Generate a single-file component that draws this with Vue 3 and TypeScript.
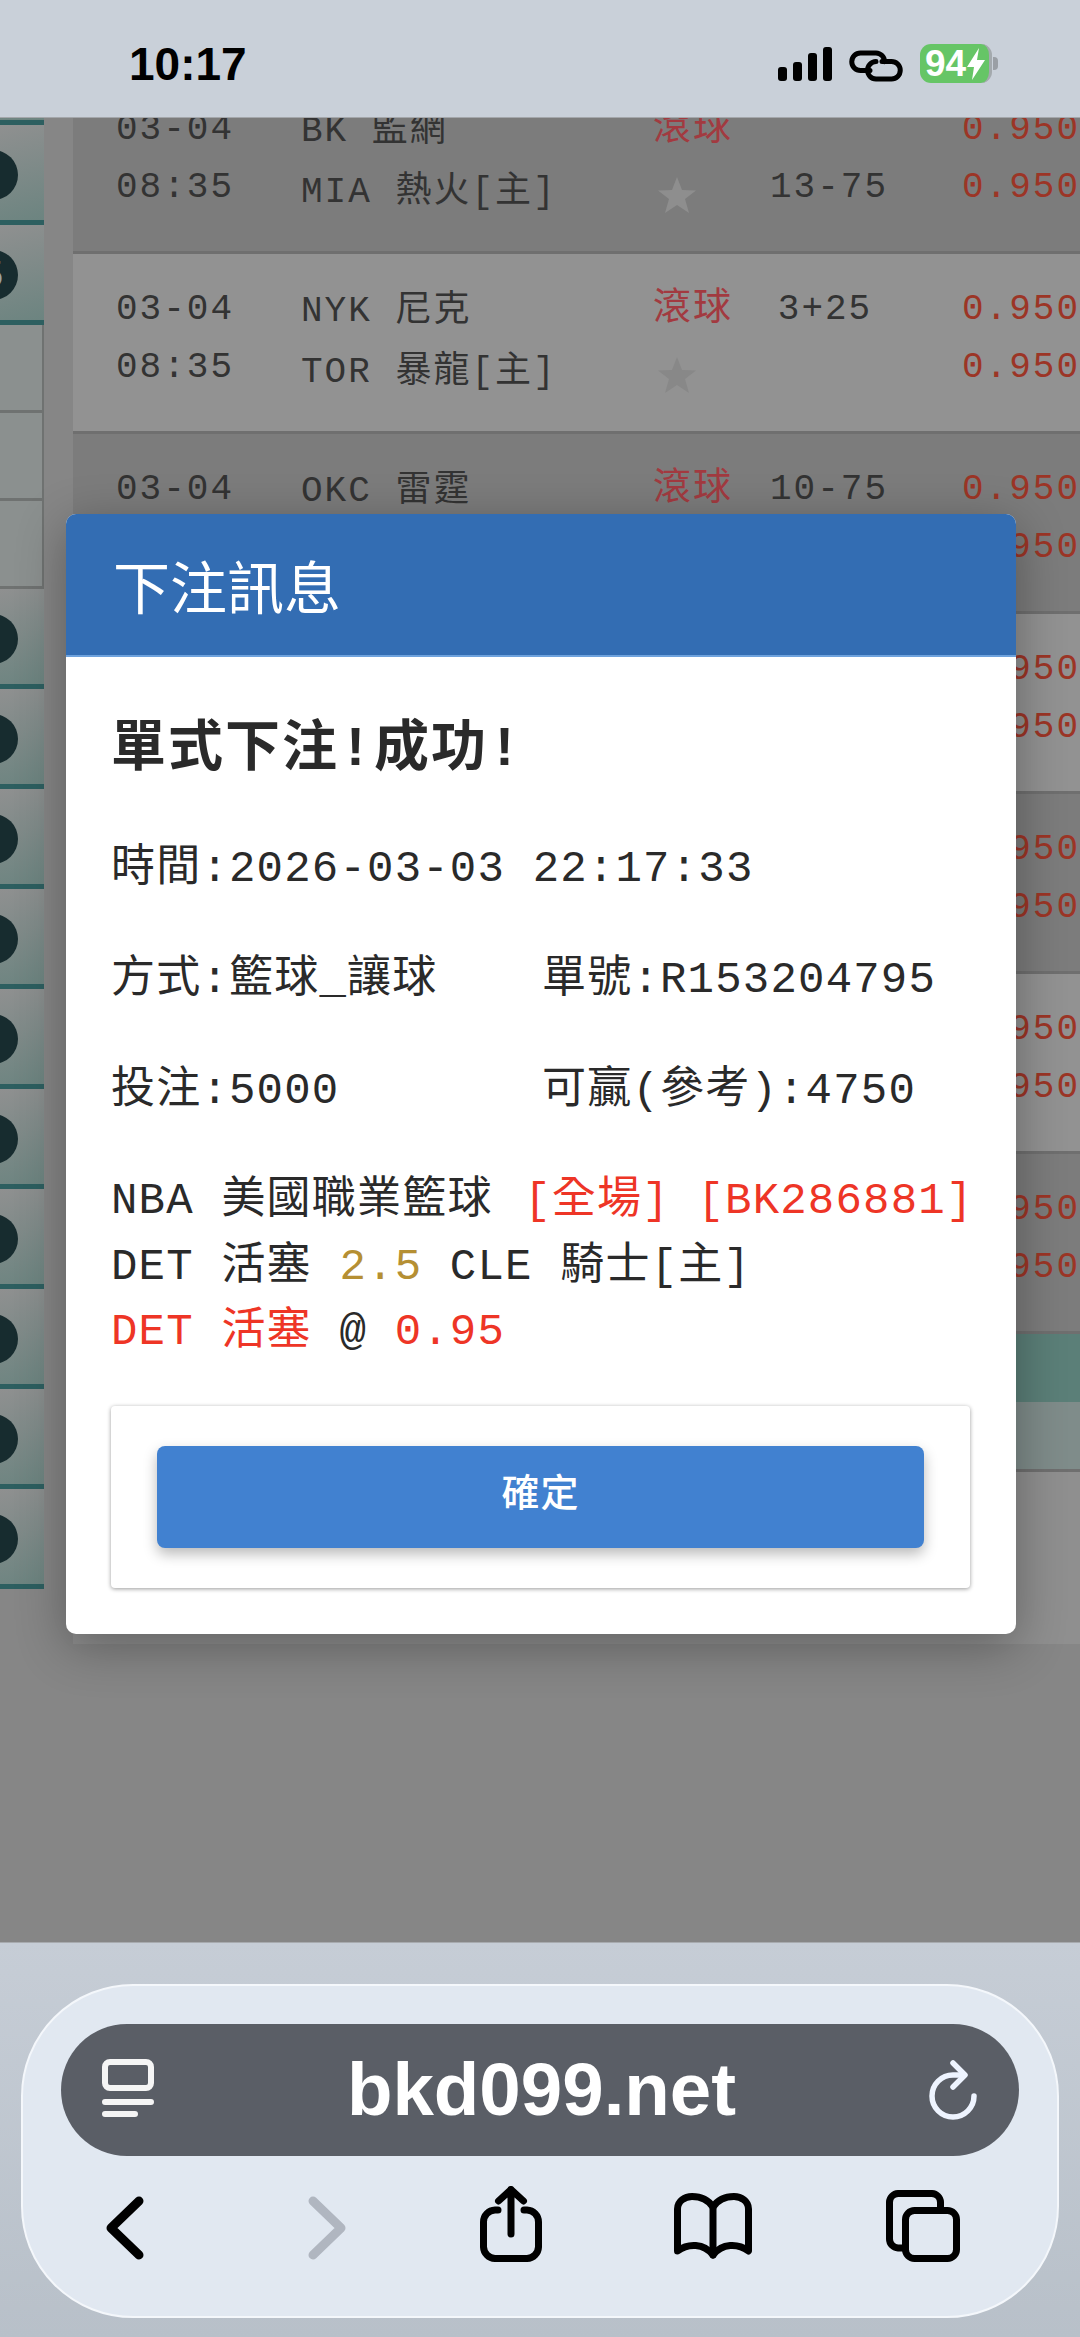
<script setup lang="ts">
interface OddsRow {
  date?: string
  time?: string
  home?: [string, string]
  away?: [string, string]
  live?: boolean
  star?: boolean
  scoreTop?: string
  scoreBottom?: string
  dark: boolean
}

const rows: OddsRow[] = [
  { date: '03-04', time: '08:35', home: ['BK', '監網'], away: ['MIA', '熱火[主]'], live: true, star: true, scoreBottom: '13-75', dark: true },
  { date: '03-04', time: '08:35', home: ['NYK', '尼克'], away: ['TOR', '暴龍[主]'], live: true, star: true, scoreTop: '3+25', dark: false },
  { date: '03-04', home: ['OKC', '雷霆'], live: true, scoreTop: '10-75', dark: true },
  { dark: false },
  { dark: true },
  { dark: false },
  { dark: true },
]

// sidebar: three items cut by the status bar, three plain rows, ten more items
const topItems = ['', '', '5']
const plainItems = [1, 2, 3]
const bottomItems = Array.from({ length: 10 }, (_, i) => i)
</script>

<template>
  <div class="phone">
    <header class="status">
      <span class="clock">10:17</span>
      <div class="status-icons">
        <div class="signal"><i class="b1" /><i class="b2" /><i class="b3" /><i class="b4" /></div>
        <svg class="link" width="54" height="32" viewBox="0 0 54 32" fill="none" stroke="#000" stroke-width="5" stroke-linecap="round">
          <path d="M21 20.5H11.5A8.7 8.7 0 0 1 11.5 3H27A8.7 8.7 0 0 1 35.5 11.7" />
          <path d="M33 11.5H42.5A8.7 8.7 0 0 1 42.5 29H27A8.7 8.7 0 0 1 18.5 20.3A8.7 8.7 0 0 1 27 11.5" />
        </svg>
        <div class="battery">
          <span class="level">94</span>
          <svg width="20" height="34" viewBox="0 0 20 34"><path d="M13 1L1 20H8L6 33L19 13H11Z" fill="#fff" /></svg>
        </div>
        <i class="nub" />
      </div>
    </header>

    <main class="viewport">
      <aside class="sidebar">
        <div v-for="(label, i) in topItems" :key="i" class="side-item">
          <span class="dot">{{ label }}</span>
        </div>
        <div v-for="n in plainItems" :key="'p' + n" class="side-plain" />
        <div v-for="n in bottomItems" :key="'b' + n" class="side-item"><span class="dot" /></div>
      </aside>

      <section class="panel">
        <div v-for="(row, i) in rows" :key="i" class="row" :class="{ dark: row.dark }">
          <span class="cell">{{ row.date }}</span>
          <span class="cell team"><template v-if="row.home">{{ row.home[0] }} <span class="cjk">{{ row.home[1] }}</span></template></span>
          <span class="cell live">{{ row.live ? '滾球' : '' }}</span>
          <span class="cell score">{{ row.scoreTop }}</span>
          <span class="cell odds">0.950</span>

          <span class="cell">{{ row.time }}</span>
          <span class="cell team low"><template v-if="row.away">{{ row.away[0] }} <span class="cjk">{{ row.away[1] }}</span></template></span>
          <span class="cell star">
            <svg v-if="row.star" width="38" height="36" viewBox="0 0 38 36"><path d="M19 0L24 13L38 13.500L27 22L31 36L19 28L7 36L11 22L0 13.500L14 13Z" /></svg>
          </span>
          <span class="cell score">{{ row.scoreBottom }}</span>
          <span class="cell odds">0.950</span>
        </div>
        <div class="band" />
        <div class="row-tail" />
      </section>

      <div class="modal">
        <h2 class="modal-head">下注訊息</h2>
        <div class="modal-body">
          <h3 class="result">單式下注!成功!</h3>
          <p class="line first">時間:2026-03-03 22:17:33</p>
          <div class="pair">
            <span>方式:籃球_讓球</span>
            <span>單號:R153204795</span>
          </div>
          <div class="pair">
            <span>投注:5000</span>
            <span>可贏(參考):4750</span>
          </div>
          <div class="detail">
            <p>NBA 美國職業籃球 <span class="red league">[全場] [BK286881]</span></p>
            <p>DET 活塞 <span class="gold">2.5</span> CLE 騎士[主]</p>
            <p><span class="red">DET 活塞</span> @ <span class="red">0.95</span></p>
          </div>
          <div class="actions">
            <button class="confirm" type="button">確定</button>
          </div>
        </div>
      </div>
    </main>

    <footer class="toolbar">
      <div class="bar-card">
        <div class="url">
          <svg class="url-tab" width="54" height="62" viewBox="0 0 54 62" fill="none" stroke="#f5f5f5" stroke-width="6" stroke-linecap="round">
            <rect x="4" y="3" width="46" height="26" rx="5" />
            <path d="M4 43H50M4 55H34" />
          </svg>
          <span class="host">bkd099.net</span>
          <svg class="url-reload" width="50" height="60" viewBox="0 0 50 60" fill="none" stroke="#eef4ff" stroke-width="5.500" stroke-linecap="round" stroke-linejoin="round">
            <path d="M46 36A21 21 0 1 1 25 15H36" />
            <path d="M25 3L37 15L25 27" />
          </svg>
        </div>
        <nav class="nav">
          <svg class="n-back" width="40" height="64" viewBox="0 0 40 64" fill="none" stroke="#000" stroke-width="9" stroke-linecap="round" stroke-linejoin="round">
            <path d="M34 5L6 32L34 59" />
          </svg>
          <svg class="n-fwd" width="40" height="64" viewBox="0 0 40 64" fill="none" stroke="#b0b6c0" stroke-width="9" stroke-linecap="round" stroke-linejoin="round">
            <path d="M6 5L34 32L6 59" />
          </svg>
          <svg class="n-share" width="62" height="76" viewBox="0 0 62 76" fill="none" stroke="#000" stroke-width="7" stroke-linecap="round" stroke-linejoin="round">
            <path d="M18 24H15A12 12 0 0 0 3.500 36V61A12 12 0 0 0 15 72.500H47A12 12 0 0 0 58.500 61V36A12 12 0 0 0 47 24H44" />
            <path d="M31 48V3.500M18.500 15L31 3.500L43.500 15" />
          </svg>
          <svg class="n-book" width="78" height="66" viewBox="0 0 78 66" fill="none" stroke="#000" stroke-width="7" stroke-linecap="round" stroke-linejoin="round">
            <path d="M39 14V62" />
            <path d="M39 14C33 5 25 3.500 18 3.500C11 3.500 3.500 8 3.500 16V58C14 50 30 50 39 62C48 50 64 50 74.500 58V16C74.500 8 67 3.500 60 3.500C53 3.500 45 5 39 14Z" />
          </svg>
          <svg class="n-tabs" width="74" height="72" viewBox="0 0 74 72" fill="none" stroke="#000" stroke-width="7">
            <path d="M17 58H12A9 9 0 0 1 3.500 49V12A9 9 0 0 1 12 3.500H46A9 9 0 0 1 54.500 12V20" />
            <rect x="19.500" y="20.500" width="51" height="48" rx="9" />
          </svg>
        </nav>
      </div>
    </footer>
  </div>
</template>

<style>
html,
body {
  margin: 0;
  background: #868686;
}
</style>

<style scoped>
.phone {
  display: flex;
  flex-direction: column;
  width: 1080px;
  height: 2337px;
  overflow: hidden;
  font-family: "Liberation Mono", "Noto Sans CJK TC", monospace;
  background: #868686;
}

/* status bar */
.status {
  position: relative;
  z-index: 3;
  display: flex;
  flex: none;
  align-items: flex-start;
  justify-content: space-between;
  height: 118px;
  padding: 0 82px 0 129px;
  box-sizing: border-box;
  background: #c9d0d9;
  border-bottom: 1px solid #a4a7ab;
}
.clock {
  margin-top: 38px;
  font: 700 46px/52px "Liberation Sans", sans-serif;
  color: #000;
}
.status-icons {
  display: flex;
  align-items: flex-end;
  height: 83px;
}
.signal {
  display: flex;
  align-items: flex-end;
  gap: 6px;
  height: 34px;
  margin-bottom: 2px;
}
.signal i {
  width: 9px;
  border-radius: 3px;
  background: #000;
}
.signal .b1 { height: 14px; }
.signal .b2 { height: 19px; }
.signal .b3 { height: 28px; }
.signal .b4 { height: 34px; }
.link {
  margin: 0 17px 1px 17px;
}
.battery {
  display: flex;
  align-items: center;
  justify-content: center;
  width: 72px;
  height: 39px;
  padding-left: 2px;
  box-sizing: border-box;
  border-radius: 11px;
  background: #66c566;
  border-right: 3px solid #a3a9ad;
}
.level {
  font: 700 37px/39px "Liberation Sans", sans-serif;
  color: #fff;
}
.nub {
  width: 5px;
  height: 13px;
  margin: 0 0 13px 1px;
  border-radius: 0 4px 4px 0;
  background: #9a9fa5;
}

/* page behind the dialog */
.viewport {
  position: relative;
  display: flex;
  flex: 1;
  overflow: hidden;
  background: #868686;
}
.sidebar {
  flex: none;
  width: 44px;
  margin: -93px 29px 0 0;
}
.side-item {
  display: flex;
  align-items: center;
  height: 100px;
  padding-top: 5px;
  box-sizing: border-box;
  overflow: hidden;
  background: linear-gradient(165deg, #8f9090, #6c8480);
  border-bottom: 5px solid #2d5f60;
}
.dot {
  flex: none;
  width: 50px;
  height: 50px;
  margin-left: -32px;
  border-radius: 50%;
  background: #172c2f;
  font: 36px/50px "Liberation Sans", sans-serif;
  text-align: center;
  color: #9aa3a3;
}
.side-plain {
  height: 88px;
  box-sizing: border-box;
  background: #8b908f;
  border-right: 2px solid #6f7271;
  border-bottom: 3px solid #6f7271;
}
.panel {
  flex: 1;
  height: 1570px;
  margin-top: -44px;
  background: #8f8f8f;
}
.row {
  display: grid;
  grid-template-columns: 185px 352px 117px 110px 192px;
  grid-template-rows: 58px 58px;
  align-content: start;
  height: 180px;
  padding: 26px 0 0 43px;
  box-sizing: border-box;
  overflow: hidden;
  background: #929292;
  border-bottom: 3px solid #6f6f6f;
  font-size: 36px;
  letter-spacing: 2px;
  color: #333;
}
.row.dark {
  background: #7c7c7c;
}
.cell {
  padding-top: 2px;
  line-height: 56px;
  box-sizing: border-box;
  white-space: nowrap;
}
.team {
  padding-top: 6px;
  line-height: 52px;
}
.team.low {
  padding-top: 11px;
  line-height: 47px;
}
.live {
  padding-top: 0;
  line-height: 58px;
  font-size: 38px;
  color: #a23a40;
}
.star {
  display: flex;
  align-items: center;
  padding: 16px 0 0 5px;
  box-sizing: border-box;
  fill: #888;
}
.row.dark .star {
  fill: #8e8e8e;
}
.score {
  text-align: center;
}
.odds {
  padding-left: 82px;
  color: #9c3526;
}
.band {
  height: 68px;
  background: #5b7f78;
}
.row-tail {
  height: 70px;
  box-sizing: border-box;
  background: #7f8c8a;
  border-bottom: 3px solid #6f6f6f;
}

/* dialog */
.modal {
  position: absolute;
  top: 396px;
  left: 66px;
  z-index: 2;
  width: 950px;
  border-radius: 10px;
  overflow: hidden;
  background: #fff;
  box-shadow: 0 12px 50px rgba(0, 0, 0, 0.32);
}
.modal-head {
  height: 143px;
  margin: 0;
  padding-left: 47px;
  box-sizing: border-box;
  background: #336db3;
  border-bottom: 2px solid #6ea2dd;
  font: 400 57px/141px "Noto Sans CJK TC", sans-serif;
  color: #fff;
}
.modal-body {
  padding: 62px 46px 46px 45px;
  font-size: 44px;
  line-height: 66px;
  letter-spacing: 1.200px;
  color: #2a2a2a;
}
.result {
  height: 64px;
  margin: 0;
  font-size: 55px;
  font-weight: 700;
  line-height: 64px;
  letter-spacing: 2px;
}
.line {
  margin: 53px 0 0;
  white-space: nowrap;
}
.pair {
  display: grid;
  grid-template-columns: 431px 1fr;
  margin-top: 45px;
  white-space: nowrap;
}
.detail {
  margin-top: 45px;
  white-space: nowrap;
}
.detail p {
  margin: 0;
  line-height: 65.500px;
}
.red {
  color: #ee3526;
}
.league {
  margin-left: 4px;
}
.gold {
  color: #b58f33;
}
.actions {
  display: flex;
  height: 182px;
  margin-top: 40px;
  padding: 40px 46px;
  box-sizing: border-box;
  border-radius: 4px;
  background: #fff;
  box-shadow: 0 1px 4px rgba(0, 0, 0, 0.4);
}
.confirm {
  flex: 1;
  height: 102px;
  padding: 0 0 14px;
  border: 0;
  border-radius: 8px;
  background: #4181d0;
  box-shadow: 0 6px 14px rgba(0, 0, 0, 0.28);
  font: 500 38px/88px "Noto Sans CJK TC", sans-serif;
  letter-spacing: 1px;
  color: #fff;
}

/* browser toolbar */
.toolbar {
  position: relative;
  z-index: 3;
  flex: none;
  height: 395px;
  padding: 41px 21px 0;
  box-sizing: border-box;
  background: linear-gradient(#c6cdd6, #b8c0c9);
  border-top: 1px solid #a8abaf;
}
.bar-card {
  height: 334px;
  padding: 38px 38px 0;
  box-sizing: border-box;
  border: 2px solid #f4f7fb;
  border-radius: 112px;
  background: #e1e8f1;
}
.url {
  display: flex;
  align-items: center;
  justify-content: space-between;
  height: 132px;
  padding: 0 41px 0 40px;
  box-sizing: border-box;
  border-radius: 66px;
  background: #5a5e66;
}
.host {
  font: 700 74.500px/132px "Liberation Sans", sans-serif;
  color: #fff;
}
.nav {
  display: flex;
  align-items: flex-start;
  height: 100px;
  margin-top: 30px;
}
.n-back { margin: 10px 0 0 44px; }
.n-fwd { margin: 10px 0 0 162px; }
.n-share { margin: 0 0 0 133px; }
.n-book { margin: 7px 0 0 132px; }
.n-tabs { margin: 4px 0 0 134px; }
</style>
